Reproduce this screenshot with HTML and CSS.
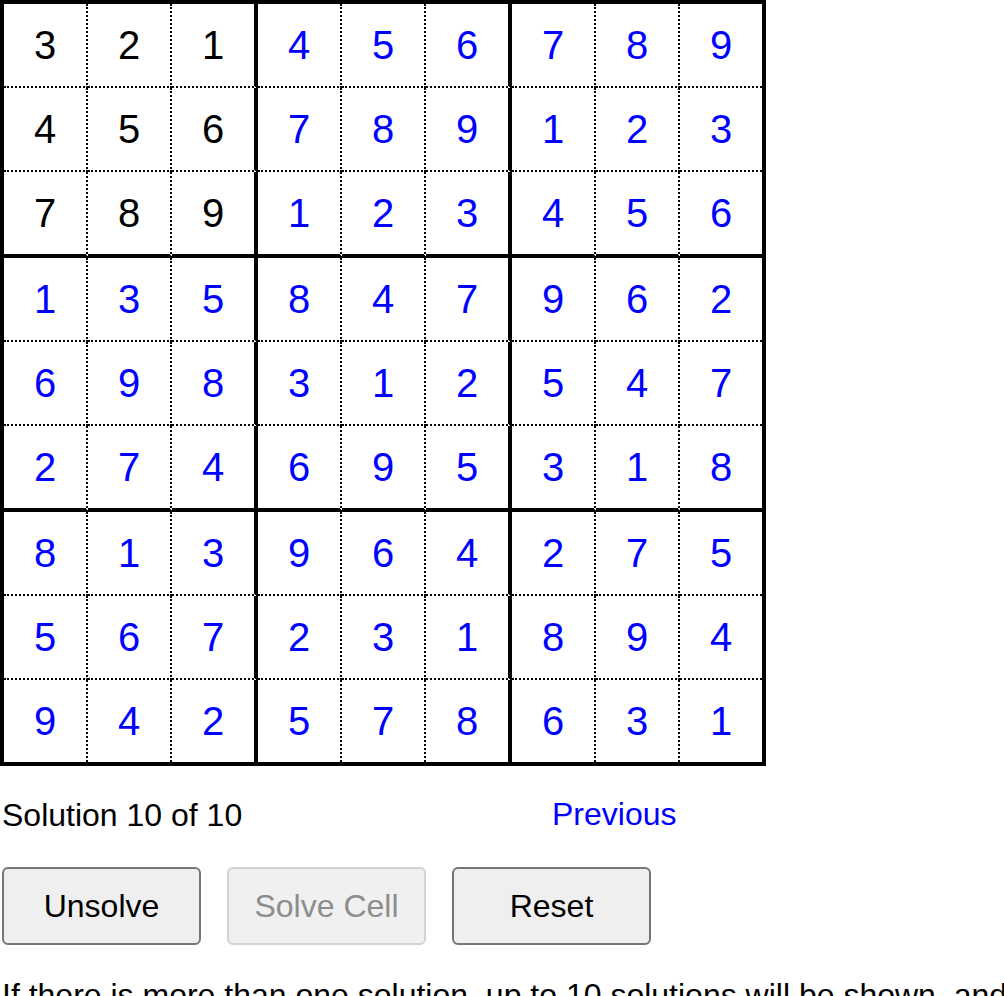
FILE: index.html
```html
<!DOCTYPE html>
<html lang="en">
<head>
    <meta charset="UTF-8">
    <meta name="viewport" content="width=device-width, initial-scale=1.0">
    <title>Sudoku Solver</title>
    <link rel="stylesheet" href="styles.css">
</head>
<body>
    <div class="board" id="board"></div>

    <div class="status">
        <span>Solution 10 of 10</span>
        <a href="#" class="nav-link">Previous</a>
    </div>

    <div class="buttons">
        <button>Unsolve</button>
        <button disabled>Solve Cell</button>
        <button>Reset</button>
    </div>

    <p class="note">If there is more than one solution, up to 10 solutions will be shown, and you can step through them with the Previous and Next links.</p>

    <script>
        // Grille résolue, les cases données sont en noir
        const solution = [
            '321456789',
            '456789123',
            '789123456',
            '135847962',
            '698312547',
            '274695318',
            '813964275',
            '567231894',
            '942578631'
        ];
        const given = [
            '321......',
            '456......',
            '789......',
            '.........',
            '.........',
            '.........',
            '.........',
            '.........',
            '.........'
        ];

        const board = document.getElementById('board');
        for (let r = 0; r < 9; r++) {
            for (let c = 0; c < 9; c++) {
                const cell = document.createElement('div');
                cell.className = 'cell';
                if (given[r][c] !== '.') {
                    cell.classList.add('given');
                }
                if (c === 2 || c === 5) cell.classList.add('box-right');
                if (c === 8) cell.classList.add('last-col');
                if (r === 2 || r === 5) cell.classList.add('box-bottom');
                if (r === 8) cell.classList.add('last-row');
                cell.textContent = solution[r][c];
                board.appendChild(cell);
            }
        }
    </script>
</body>
</html>
```

FILE: styles.css
```css
body {
    margin: 0;
    font-family: "Liberation Sans", Arial, sans-serif;
    font-size: 32px;
    color: #000;
    background: #fff;
}
.board {
    display: grid;
    grid-template-columns: repeat(9, auto);
    width: max-content;
    border: 4px solid #000;
}
.cell {
    width: 82px;
    height: 82px;
    display: flex;
    align-items: center;
    justify-content: center;
    font-size: 40px;
    color: #0000ff;
    border-right: 2px dotted #000;
    border-bottom: 2px dotted #000;
}
.cell.given {
    color: #000;
}
.cell.box-right {
    border-right: 4px solid #000;
}
.cell.box-bottom {
    border-bottom: 4px solid #000;
}
.cell.last-col {
    border-right: none;
}
.cell.last-row {
    border-bottom: none;
}
.status {
    display: grid;
    grid-template-columns: 550px auto;
    align-items: center;
    margin-top: 31px;
    padding-left: 2px;
}
.nav-link {
    color: #0000ff;
    text-decoration: none;
    margin-top: -3px;
}
.buttons {
    display: flex;
    gap: 26px;
    margin-top: 33px;
    padding-left: 2px;
}
button {
    width: 199px;
    height: 78px;
    font-family: "Liberation Sans", Arial, sans-serif;
    font-size: 32px;
    color: #000;
    background-color: #efefef;
    border: 2px solid #767676;
    border-radius: 6px;
}
button:disabled {
    color: #8d8d8d;
    background-color: #f0f0f0;
    border-color: #d3d3d3;
}
.note {
    width: 1100px;
    margin: 32px 0 0;
    padding-left: 2px;
}
```
